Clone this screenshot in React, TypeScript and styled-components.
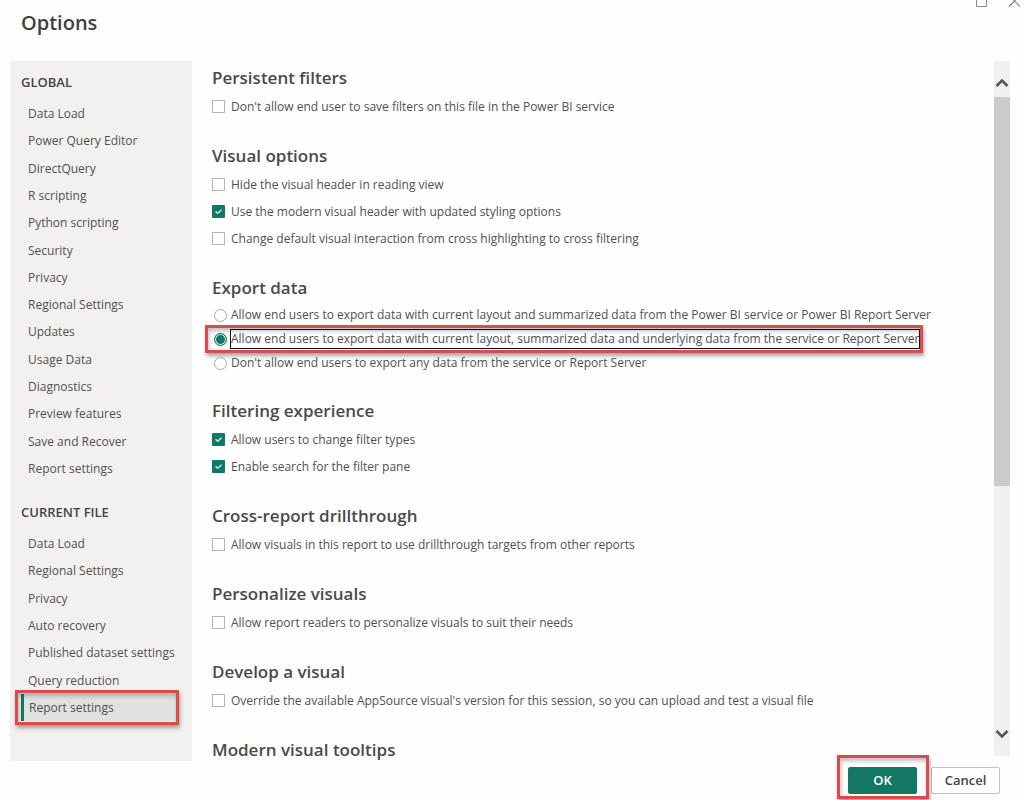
import React, { useState } from "react";
import styled, { createGlobalStyle, css } from "styled-components";

const GlobalStyle = createGlobalStyle`
  *, *::before, *::after { box-sizing: border-box; }
  body {
    margin: 0;
    background: #fefefe;
    color: #505050;
    font-family: "Open Sans", "Noto Sans", sans-serif;
    font-size: 12px;
  }
  h1, h2, h3, ul, fieldset { margin: 0; padding: 0; border: 0; }
  ul { list-style: none; }
  button { font-family: inherit; cursor: pointer; }
`;

const Dialog = styled.div`
  display: flex;
  flex-direction: column;
  height: 100vh;
  min-height: 760px;
  overflow: hidden;
`;

const Header = styled.header`
  display: flex;
  justify-content: space-between;
  align-items: flex-start;
  height: 61px;
  flex: none;
  padding-left: 21px;
`;

const Title = styled.h1`
  padding-top: 8px;
  font-size: 20px;
  line-height: 30px;
  font-weight: 600;
  color: #404040;
`;

const WindowControls = styled.div`
  display: flex;
  gap: 20px;
  padding-right: 3px;
`;

const WindowButton = styled.button`
  display: block;
  padding: 0;
  border: 0;
  background: none;
  line-height: 0;
`;

const Body = styled.div`
  display: flex;
  flex: 1;
  min-height: 0;
  padding: 0 14px 0 10px;
`;

const Sidebar = styled.nav`
  display: flex;
  flex-direction: column;
  width: 182px;
  flex: none;
  padding: 11px 13px 40px 11px;
  background: #f3f1ef;
`;

const NavHeading = styled.h2<{ $spaced?: boolean }>`
  margin: ${(p) => (p.$spaced ? "20px 0 8px" : "0 0 8px")};
  font-size: 13px;
  line-height: 20px;
  font-weight: 600;
  color: #444;
`;

const NavList = styled.ul<{ $count: number }>`
  display: flex;
  flex-direction: column;
  flex: ${(p) => p.$count} 0 auto;
`;

const NavItem = styled.li`
  display: flex;
  position: relative;
  flex: 1 0 27px;
`;

const NavLink = styled.a<{ $active?: boolean }>`
  display: flex;
  align-items: center;
  flex: 1;
  padding-left: 7px;
  color: inherit;
  text-decoration: none;
  white-space: nowrap;
  ${(p) =>
    p.$active &&
    css`
      padding-left: 5px;
      border-left: 3px solid #117865;
      background: #e1e1e1;
    `}
`;

const Callout = styled.span<{ $inset: string }>`
  position: absolute;
  inset: ${(p) => p.$inset};
  border: 3px solid #dc4a4c;
  box-shadow: 1px 3px 4px rgba(0, 0, 0, 0.35), inset 1px 3px 4px rgba(0, 0, 0, 0.25);
  pointer-events: none;
`;

const Main = styled.main`
  display: flex;
  flex-direction: column;
  gap: 24px;
  flex: 1;
  min-width: 0;
  padding: 5px 0 0 20px;
  overflow: hidden;
`;

const SectionTitle = styled.h2`
  margin-bottom: 3px;
  font-size: 17px;
  line-height: 24px;
  font-weight: 600;
  color: #4a4a4a;
`;

const Option = styled.label`
  display: flex;
  align-items: center;
  gap: 6px;
  height: 27px;
  white-space: nowrap;
`;

const RadioOption = styled(Option)`
  position: relative;
  width: max-content;
  height: 24px;
  gap: 4px;
  padding-left: 2px;
`;

const OptionText = styled.span<{ $focused?: boolean }>`
  line-height: 18px;
  ${(p) =>
    p.$focused &&
    css`
      outline: 1px solid #111;
    `}
`;

const Checkbox = styled.input`
  appearance: none;
  width: 13px;
  height: 13px;
  flex: none;
  margin: 0;
  border: 1px solid #b5b5b5;
  background: #fff;
  &:checked {
    border: 0;
    border-radius: 1px;
    background: #117865;
  }
`;

const CheckCell = styled.span`
  display: grid;
  flex: none;
  & > * {
    grid-area: 1 / 1;
    place-self: center;
  }
  & > svg {
    pointer-events: none;
  }
`;

const Radio = styled.input`
  appearance: none;
  width: 13px;
  height: 13px;
  flex: none;
  margin: 0;
  border: 1px solid #aaa;
  border-radius: 50%;
  background: #fff;
  &:checked {
    border-color: #117865;
    background: #117865;
    box-shadow: inset 0 0 0 1px #e4f2ef;
  }
`;

const ScrollRail = styled.div`
  display: flex;
  flex-direction: column;
  width: 16px;
  flex: none;
  margin-bottom: 5px;
  padding: 8px 0;
  background: #f0f0f0;
`;

const ScrollArrow = styled.button`
  display: grid;
  place-items: center;
  height: 28px;
  flex: none;
  padding: 0;
  border: 0;
  background: none;
`;

const ScrollTrack = styled.div`
  display: grid;
  grid-template-rows: 5fr 3fr;
  flex: 1;
`;

const ScrollThumb = styled.div`
  background: #cbcbcb;
`;

const Footer = styled.footer`
  display: flex;
  justify-content: flex-end;
  gap: 14px;
  height: 39px;
  flex: none;
  padding: 6px 24px 0 0;
`;

const ButtonSlot = styled.div`
  position: relative;
`;

const ActionButton = styled.button<{ $primary?: boolean }>`
  display: block;
  width: 69px;
  height: 27px;
  padding: 0 0 2px;
  border: 1px solid ${(p) => (p.$primary ? "#117865" : "#c2c2c2")};
  border-radius: 2px;
  background: ${(p) => (p.$primary ? "#117865" : "#fff")};
  color: ${(p) => (p.$primary ? "#fff" : "#444")};
  font-size: 13px;
  font-weight: 600;
`;

const globalItems = [
  "Data Load",
  "Power Query Editor",
  "DirectQuery",
  "R scripting",
  "Python scripting",
  "Security",
  "Privacy",
  "Regional Settings",
  "Updates",
  "Usage Data",
  "Diagnostics",
  "Preview features",
  "Save and Recover",
  "Report settings",
];

const fileItems = [
  "Data Load",
  "Regional Settings",
  "Privacy",
  "Auto recovery",
  "Published dataset settings",
  "Query reduction",
  "Report settings",
];

const exportChoices = [
  "Allow end users to export data with current layout and summarized data from the Power BI service or Power BI Report Server",
  "Allow end users to export data with current layout, summarized data and underlying data from the service or Report Server",
  "Don't allow end users to export any data from the service or Report Server",
];

function CheckOption({ text, initial = false }: { text: string; initial?: boolean }) {
  const [checked, setChecked] = useState(initial);
  return (
    <Option>
      <CheckCell>
        <Checkbox type="checkbox" checked={checked} onChange={() => setChecked(!checked)} />
        {checked && (
          <svg width="13" height="13" viewBox="0 0 13 13" fill="none" stroke="#d5ece6" strokeWidth="1.4">
            <path d="M3.5 6.2 5.7 8.2 9.6 4.8" />
          </svg>
        )}
      </CheckCell>
      <OptionText>{text}</OptionText>
    </Option>
  );
}

function Chevron({ up }: { up?: boolean }) {
  return (
    <svg width="14" height="10" viewBox="0 0 14 10" fill="none" stroke="#555" strokeWidth="2.6">
      <path d={up ? "M1.5 8 7 2.5 12.5 8" : "M1.5 2 7 7.5 12.5 2"} />
    </svg>
  );
}

export default function App() {
  const [choice, setChoice] = useState(1);
  return (
    <>
      <GlobalStyle />
      <Dialog role="dialog" aria-label="Options">
        <Header>
          <Title>Options</Title>
          <WindowControls>
            <WindowButton aria-label="Maximize">
              <svg width="12" height="7" viewBox="0 0 12 7" fill="none" stroke="#8a8a8a">
                <path d="M.5 0V6.500H10.500V0" />
              </svg>
            </WindowButton>
            <WindowButton aria-label="Close">
              <svg width="13" height="7" viewBox="0 0 13 7" fill="none" stroke="#8a8a8a" strokeWidth="1.2">
                <path d="M1 6.500 7.500 0M12 6.500 5.500 0" />
              </svg>
            </WindowButton>
          </WindowControls>
        </Header>
        <Body>
          <Sidebar>
            <NavHeading>GLOBAL</NavHeading>
            <NavList $count={globalItems.length}>
              {globalItems.map((item) => (
                <NavItem key={item}>
                  <NavLink href="#">{item}</NavLink>
                </NavItem>
              ))}
            </NavList>
            <NavHeading $spaced>CURRENT FILE</NavHeading>
            <NavList $count={fileItems.length}>
              {fileItems.map((item) => {
                const active = item === "Report settings";
                return (
                  <NavItem key={item}>
                    <NavLink href="#" $active={active}>
                      {item}
                    </NavLink>
                    {active && <Callout $inset="-4px 0 -4px -6px" />}
                  </NavItem>
                );
              })}
            </NavList>
          </Sidebar>
          <Main>
            <section>
              <SectionTitle>Persistent filters</SectionTitle>
              <CheckOption text="Don't allow end user to save filters on this file in the Power BI service" />
            </section>
            <section>
              <SectionTitle>Visual options</SectionTitle>
              <CheckOption text="Hide the visual header in reading view" />
              <CheckOption text="Use the modern visual header with updated styling options" initial />
              <CheckOption text="Change default visual interaction from cross highlighting to cross filtering" />
            </section>
            <section>
              <SectionTitle>Export data</SectionTitle>
              {exportChoices.map((text, i) => (
                <RadioOption key={text}>
                  <Radio type="radio" name="export" checked={choice === i} onChange={() => setChoice(i)} />
                  <OptionText $focused={i === 1}>{text}</OptionText>
                  {i === 1 && <Callout $inset="-2px -4px -2px -7px" />}
                </RadioOption>
              ))}
            </section>
            <section>
              <SectionTitle>Filtering experience</SectionTitle>
              <CheckOption text="Allow users to change filter types" initial />
              <CheckOption text="Enable search for the filter pane" initial />
            </section>
            <section>
              <SectionTitle>Cross-report drillthrough</SectionTitle>
              <CheckOption text="Allow visuals in this report to use drillthrough targets from other reports" />
            </section>
            <section>
              <SectionTitle>Personalize visuals</SectionTitle>
              <CheckOption text="Allow report readers to personalize visuals to suit their needs" />
            </section>
            <section>
              <SectionTitle>Develop a visual</SectionTitle>
              <CheckOption text="Override the available AppSource visual's version for this session, so you can upload and test a visual file" />
            </section>
            <section>
              <SectionTitle>Modern visual tooltips</SectionTitle>
            </section>
          </Main>
          <ScrollRail>
            <ScrollArrow aria-label="Scroll up">
              <Chevron up />
            </ScrollArrow>
            <ScrollTrack>
              <ScrollThumb />
            </ScrollTrack>
            <ScrollArrow aria-label="Scroll down">
              <Chevron />
            </ScrollArrow>
          </ScrollRail>
        </Body>
        <Footer>
          <ButtonSlot>
            <ActionButton $primary>OK</ActionButton>
            <Callout $inset="-12px -12px 1px -11px" />
          </ButtonSlot>
          <ActionButton>Cancel</ActionButton>
        </Footer>
      </Dialog>
    </>
  );
}
